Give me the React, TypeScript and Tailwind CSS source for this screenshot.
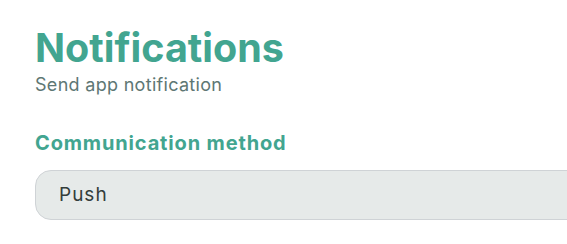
export default function App() {
  return (
    <div className="w-[567px] h-[244px] overflow-hidden bg-white" style={{ fontFamily: "Inter, 'DejaVu Sans', sans-serif" }}>
      <div className="pl-[35px] pt-[25px] w-[640px]">
        <h1 className="text-[39.5px] leading-[46px] font-bold text-[#42a590] tracking-[0px]">Notifications</h1>
        <p className="text-[18px] leading-[22px] text-[#5e7774] mt-[3px] tracking-[0.3px]">Send app notification</p>
        <div className="mt-[35px] text-[20px] leading-[24px] font-bold text-[#42a590] tracking-[0.85px]">Communication method</div>
        <div className="mt-[15px] h-[50px] rounded-[16px] border border-[#cfd3d6] bg-[#e6eae9] flex items-center pl-[23px] text-[19px] tracking-[1px] text-[#333d3b]">
          Push
        </div>
      </div>
    </div>
  );
}
